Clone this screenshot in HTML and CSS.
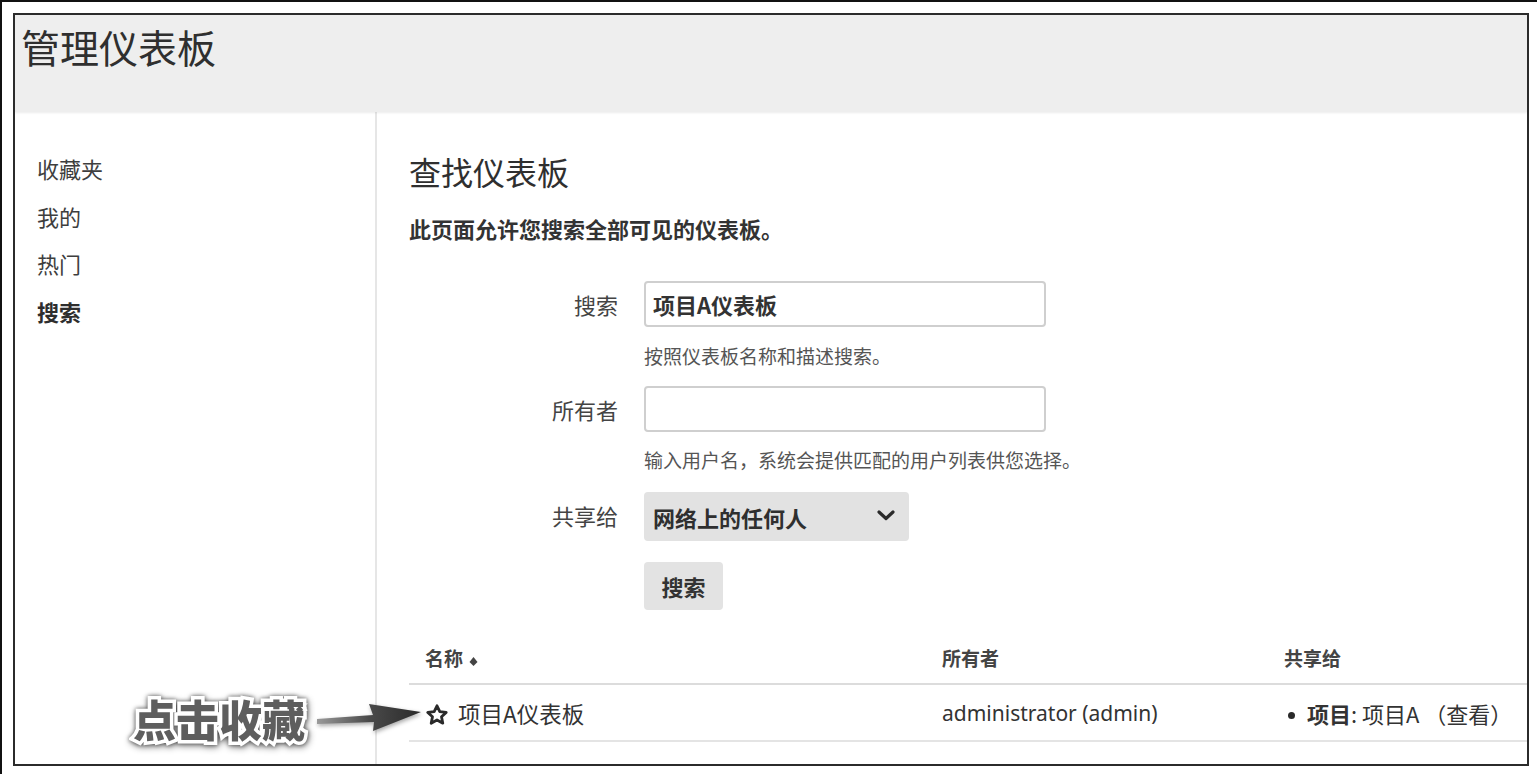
FILE: index.html
```html
<!DOCTYPE html>
<html lang="zh-CN">
<head>
<meta charset="utf-8">
<title>管理仪表板</title>
<link rel="stylesheet" href="styles.css">
</head>
<body>
<div class="page">
  <div class="frame">
    <header class="topbar">
      <h1 class="title">管理仪表板</h1>
    </header>
    <div class="layout">
      <nav class="sidebar">
        <ul class="nav">
          <li class="nav-item">收藏夹</li>
          <li class="nav-item">我的</li>
          <li class="nav-item">热门</li>
          <li class="nav-item active">搜索</li>
        </ul>
      </nav>
      <main class="main">
        <h2 class="heading">查找仪表板</h2>
        <p class="intro">此页面允许您搜索全部可见的仪表板。</p>
        <form class="form">
          <div class="field">
            <label class="label">搜索</label>
            <div class="control">
              <div class="input filled">项目A仪表板</div>
              <div class="help">按照仪表板名称和描述搜索。</div>
            </div>
          </div>
          <div class="field">
            <label class="label">所有者</label>
            <div class="control">
              <div class="input"></div>
              <div class="help">输入用户名，系统会提供匹配的用户列表供您选择。</div>
            </div>
          </div>
          <div class="field">
            <label class="label">共享给</label>
            <div class="control">
              <div class="select">
                <span>网络上的任何人</span>
                <svg class="chevron" width="18" height="11" viewBox="0 0 18 11"><path d="M2 2 L9 8.5 L16 2" fill="none" stroke="#2a2a2a" stroke-width="3.2" stroke-linecap="round" stroke-linejoin="round"/></svg>
              </div>
            </div>
          </div>
          <div class="field">
            <span class="label"></span>
            <div class="control">
              <div class="button">搜索</div>
            </div>
          </div>
        </form>
        <table class="table">
          <colgroup>
            <col class="c-name"><col class="c-owner"><col class="c-share">
          </colgroup>
          <thead>
            <tr>
              <th>名称 <svg class="sort" width="9" height="11" viewBox="0 0 9 11"><path d="M4.5 1 L8.5 6 L4.5 10 L0.5 6 Z" fill="#444"/></svg></th>
              <th>所有者</th>
              <th>共享给</th>
            </tr>
          </thead>
          <tbody>
            <tr>
              <td class="name-cell"><svg class="star" width="22" height="22" viewBox="0 0 22 22"><path d="M11 1.8 L13.8 7.6 L20.2 8.4 L15.5 12.8 L16.8 19.2 L11 16 L5.2 19.2 L6.5 12.8 L1.8 8.4 L8.2 7.6 Z" fill="none" stroke="#2a2a2a" stroke-width="2.8" stroke-linejoin="round"/></svg><span class="row-name">项目A仪表板</span></td>
              <td>administrator (admin)</td>
              <td><span class="bullet"></span><b>项目</b>: 项目A （查看）</td>
            </tr>
          </tbody>
        </table>
      </main>
    </div>
    <div class="callout">
      <span class="callout-text">点击收藏</span>
      <svg class="arrow" width="110" height="40" viewBox="0 0 110 40">
        <defs>
          <linearGradient id="ag" x1="0" x2="1" y1="0" y2="0">
            <stop offset="0" stop-color="#9a9a9a"/>
            <stop offset="0.5" stop-color="#4a4a4a"/>
            <stop offset="1" stop-color="#2a2a2a"/>
          </linearGradient>
        </defs>
        <path d="M2 22 L58 18 L54 7 L106 15 L58 34 L59 25 L2 27 Z" fill="url(#ag)"/>
      </svg>
    </div>
  </div>
</div>
</body>
</html>
```
FILE: styles.css
```css
* { box-sizing: border-box; }
html, body { margin: 0; padding: 0; background: #fff; }
body {
  font-family: "Noto Sans", "Noto Sans CJK SC", sans-serif;
  color: #333;
}
.page {
  width: 1537px;
  height: 774px;
  border-top: 2px solid #111;
  border-left: 2px solid #111;
  padding: 11px 0 0 11px;
}
.frame {
  position: relative;
  width: 1516px;
  height: 753px;
  border: 2px solid #2b2b2b;
  display: flex;
  flex-direction: column;
  overflow: hidden;
}
.topbar {
  height: 97px;
  background: #eeeeee;
  box-shadow: 0 1px 2px rgba(0,0,0,0.08);
  padding: 8px 6px;
  flex: none;
  position: relative;
  z-index: 1;
}
.title {
  margin: 0;
  font-family: "Noto Sans CJK SC", sans-serif;
  font-weight: 400;
  font-size: 39px;
  line-height: 46px;
  color: #2f2f2f;
}
.layout {
  flex: 1;
  display: flex;
}
.sidebar {
  width: 362px;
  flex: none;
  border-right: 2px solid #e6e6e6;
  padding-top: 33px;
  padding-left: 22px;
}
.nav { list-style: none; margin: 0; padding: 0; }
.nav-item {
  font-family: "Noto Sans CJK SC", sans-serif;
  font-size: 22px;
  line-height: 47.5px;
  color: #3e3e3e;
}
.nav-item.active { font-weight: 700; color: #2e2e2e; }
.main {
  flex: 1;
  padding: 38px 0 0 32px;
  font-family: "Noto Sans CJK SC", sans-serif;
}
.heading {
  margin: 0;
  font-size: 32px;
  line-height: 42px;
  font-weight: 400;
  color: #2f2f2f;
}
.intro {
  margin: 21px 0 0;
  font-size: 22px;
  line-height: 30px;
  font-weight: 700;
  color: #333;
}
.form { margin-top: 38px; display: flex; flex-direction: column; }
.field { display: flex; align-items: flex-start; }
.label {
  width: 209px;
  flex: none;
  text-align: right;
  font-size: 22px;
  line-height: 46px;
  color: #444;
}
.control { margin-left: 26px; display: flex; flex-direction: column; align-items: flex-start; }
.input {
  width: 402px;
  height: 46px;
  border: 2px solid #cfcfcf;
  border-radius: 4px;
  background: #fff;
  padding: 0 7px;
  font-size: 22px;
  line-height: 42px;
  font-weight: 700;
  color: #333;
}
.help {
  margin-top: 16px;
  margin-bottom: 17px;
  font-size: 19px;
  line-height: 26px;
  color: #555;
}
.field:nth-child(2) .help { margin-top: 15px; margin-bottom: 19px; }
.select {
  width: 265px;
  height: 49px;
  background: #e2e2e2;
  border-radius: 4px;
  padding: 0 14px 0 9px;
  display: flex;
  align-items: center;
  justify-content: space-between;
  font-size: 22px;
  font-weight: 700;
  color: #2f2f2f;
}
.chevron { margin-top: -2px; }
.field:nth-child(4) { margin-top: 21px; }
.button {
  width: 79px;
  height: 48px;
  background: #e3e3e3;
  border-radius: 4px;
  display: flex;
  align-items: center;
  justify-content: center;
  font-size: 22px;
  font-weight: 700;
  color: #333;
}
.table {
  margin-top: 22px;
  width: 1118px;
  border-collapse: collapse;
  table-layout: fixed;
}
.c-name { width: 517px; }
.c-owner { width: 342px; }
.c-share { width: 259px; }
.table th {
  text-align: left;
  font-size: 19px;
  font-weight: 700;
  color: #444;
  height: 52px;
  padding: 0 16px;
  border-bottom: 2px solid #dcdcdc;
  vertical-align: middle;
}
.sort { margin-left: 2px; vertical-align: -1px; }
.table td {
  height: 57px;
  padding: 1px 16px 0;
  font-size: 22px;
  color: #333;
  border-bottom: 2px solid #e4e4e4;
  white-space: nowrap;
  vertical-align: middle;
}
.table td:nth-child(2) { font-family: "Noto Sans", "Noto Sans CJK SC", sans-serif; font-size: 21px; }
.table td:nth-child(3) { padding-left: 20px; }
.table td.name-cell { padding-left: 17px; }
.row-name { font-size: 22.5px; }
.name-cell .star { vertical-align: -3px; margin-right: 10px; }
.bullet {
  display: inline-block;
  width: 7px;
  height: 7px;
  border-radius: 50%;
  background: #2a2a2a;
  vertical-align: 4px;
  margin-right: 12px;
}
.table td b { font-weight: 700; }
.callout {
  position: absolute;
  left: 118px;
  top: 676px;
  display: flex;
  align-items: center;
  gap: 10px;
}
.callout-text {
  font-family: "Noto Sans CJK SC", sans-serif;
  font-weight: 900;
  font-size: 43px;
  line-height: 54px;
  color: #5e5e5e;
  -webkit-text-stroke: 7px #fff;
  paint-order: stroke fill;
  filter: drop-shadow(0 0 2px rgba(0,0,0,0.55)) drop-shadow(1px 2px 3px rgba(0,0,0,0.45));
}
.arrow {
  margin-top: -2px;
  filter: drop-shadow(1px 2px 2px rgba(0,0,0,0.35));
}
```
